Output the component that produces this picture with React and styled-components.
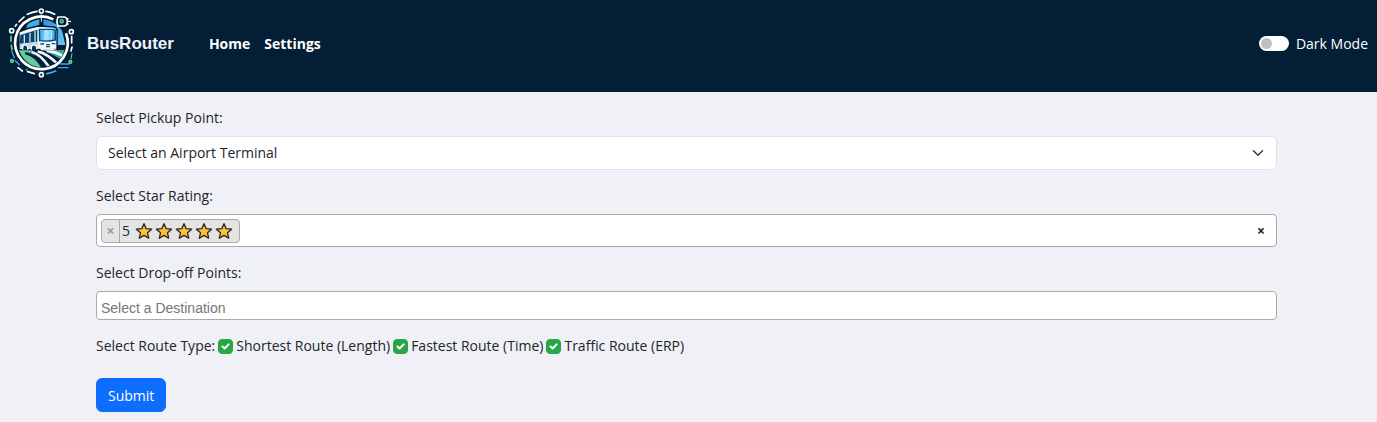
import React, { useState } from "react";
import styled, { createGlobalStyle } from "styled-components";

const GlobalStyle = createGlobalStyle`
  *, *::before, *::after { box-sizing: border-box; }
  body {
    margin: 0;
    background: #f0f1f6;
    color: #212529;
    font: 14px/22px "Open Sans", "Noto Sans", sans-serif;
  }
  button, input, select { font: inherit; color: inherit; margin: 0; }
`;

const Header = styled.header`
  display: flex;
  align-items: center;
  padding: 8px 9px 13px 8px;
  background: #031e35;
  color: #fff;
`;

const Brand = styled.a`
  display: flex;
  align-items: center;
  gap: 12px;
  color: #f0f3f5;
  text-decoration: none;
  font-family: "Liberation Sans", Arial, sans-serif;
  font-size: 17px;
  font-weight: 700;
`;

const LogoSvg = styled.svg`
  display: block;
  width: 67px;
  height: 71px;
`;

const Nav = styled.nav`
  display: flex;
  gap: 14px;
  margin-left: 35px;
`;

const NavLink = styled.a`
  color: #fff;
  font-weight: 700;
  text-decoration: none;
`;

const ThemeLabel = styled.label`
  display: flex;
  align-items: center;
  gap: 7px;
  margin-left: auto;
`;

const Switch = styled.input`
  appearance: none;
  display: flex;
  align-items: center;
  width: 30px;
  height: 15px;
  padding: 0 2px;
  border-radius: 8px;
  background: #fff;

  &::before {
    content: "";
    width: 11px;
    height: 11px;
    border-radius: 50%;
    background: #bfbfbf;
  }
  &:checked { justify-content: flex-end; }
`;

const Form = styled.form`
  display: flex;
  flex-direction: column;
  gap: 15px;
  padding: 15px 100px 10px 96px;
`;

const Field = styled.div`
  display: flex;
  flex-direction: column;
  gap: 7px;
`;

const SelectWrap = styled.div`
  display: grid;
  align-items: center;
  & > * { grid-area: 1 / 1; }
`;

const Select = styled.select`
  appearance: none;
  width: 100%;
  height: 34px;
  padding: 0 34px 0 11px;
  border: 1px solid #dee2e6;
  border-radius: 6px;
  background: #fff;
`;

const Chevron = styled.svg`
  justify-self: end;
  width: 12px;
  height: 12px;
  margin-right: 13px;
  pointer-events: none;
`;

const MultiBox = styled.div`
  display: flex;
  align-items: center;
  height: ${(p) => p.$height};
  padding: 0 4px;
  border: 1px solid #aaa;
  border-radius: 4px;
  background: #fff;
`;

const Chip = styled.span`
  display: flex;
  align-items: center;
  height: 24px;
  padding-right: 6px;
  border: 1px solid #aaa;
  border-radius: 4px;
  background: #e4e4e4;
`;

const ChipRemove = styled.button`
  width: 18px;
  height: 22px;
  padding: 0;
  border: 0;
  border-right: 1px solid #aaa;
  background: none;
  color: #999;
  font-weight: 700;
  line-height: 22px;
`;

const ChipText = styled.span`
  padding: 0 5px 0 2px;
`;

const Stars = styled.span`
  display: flex;
  gap: 2px;
`;

const StarSvg = styled.svg`
  width: 18px;
  height: 18px;
`;

const SearchInput = styled.input`
  flex: 1;
  min-width: 0;
  height: 22px;
  padding: 0;
  border: 0;
  outline: 0;
  background: transparent;
  font-family: "Liberation Sans", Arial, sans-serif;
  &::placeholder { color: #757575; opacity: 1; }
`;

const DestinationInput = styled(SearchInput)`
  margin-top: 5px;
`;

const ClearButton = styled.button`
  width: 22px;
  height: 22px;
  padding: 0;
  border: 0;
  background: none;
  font-weight: 700;
`;

const RouteTypes = styled.fieldset`
  display: flex;
  flex-wrap: wrap;
  gap: 3px;
  margin: 0;
  padding: 0;
  border: 0;
`;

const CheckLabel = styled.label`
  display: flex;
  align-items: center;
  gap: 3px;
`;

const CheckMark = styled.span`
  display: grid;
  width: 15px;
  height: 15px;
  & > * { grid-area: 1 / 1; }
`;

const Checkbox = styled.input`
  appearance: none;
  width: 15px;
  height: 15px;
  border: 1px solid #28a745;
  border-radius: 4px;
  background: #fff;
  &:checked { background: #28a745; }
`;

const Tick = styled.svg`
  width: 15px;
  height: 15px;
  pointer-events: none;
`;

const Submit = styled.button`
  align-self: flex-start;
  height: 34px;
  margin-top: 6px;
  padding: 2px 11px 0;
  border: 1px solid #0d6efd;
  border-radius: 6px;
  background: #0d6efd;
  color: #fff;
`;

function Logo() {
  return (
    <LogoSvg viewBox="24 25 201 213" fill="none" aria-hidden="true">
      <defs>
        <clipPath id="scene"><circle cx="125" cy="131" r="72" /></clipPath>
        <linearGradient id="sky" x1="0" y1="0" x2="1" y2="1">
          <stop offset="0" stopColor="#2b8fe0" />
          <stop offset="1" stopColor="#6bc8f4" />
        </linearGradient>
        <linearGradient id="glass" x1="0" y1="0" x2="1" y2="0">
          <stop offset="0" stopColor="#2b9fe8" />
          <stop offset=".5" stopColor="#a5e6ff" />
          <stop offset="1" stopColor="#2ba2ea" />
        </linearGradient>
      </defs>
      <g clipPath="url(#scene)">
        <path d="M130 56Q166 60 186 92L196 136H172V88L130 76Z" fill="url(#sky)" />
        <path d="M76 92L84 70L118 56V76Z" fill="#42a9ed" />
        <path d="M55 150H99L90 160Q114 171 126 204H105Q72 188 55 150Z" fill="#62c99a" />
        <path d="M165 151H199L183 181Q166 167 138 157Z" fill="#35a88e" />
        <path d="M94 157Q121 162 151 207M113 155Q142 162 172 192M140 153Q166 156 187 168" stroke="#eefaff" strokeWidth="8" />
        <path d="M76 160Q109 167 129 207" stroke="#031e35" strokeWidth="7" />
      </g>
      <path d="M124 46V78" stroke="#031e35" strokeWidth="7" />
      <path d="M124 44V66" stroke="#fff" strokeWidth="3" />
      <path d="M57 97Q84 84 115 79L162 82Q171 84 171 94V146Q152 154 118 149L57 150Z" fill="#f0f8fc" stroke="#031e35" strokeWidth="4" />
      <path d="M61 106L112 90V126L59 132Z" fill="#0d4168" />
      <path d="M73 105V130M90 99V128M105 93V126" stroke="#c3e6f8" strokeWidth="4" />
      <path d="M118 89H161Q167 90 166 97V121Q146 126 119 123Z" fill="url(#glass)" stroke="#064876" strokeWidth="4" />
      <path d="M137 92L134 121M154 92V120" stroke="#c2f0ff" strokeWidth="3" />
      <path d="M60 133L114 127V146H60Z" fill="#bdd8e7" />
      <path d="M68 150V141Q75 130 83 141V150M94 150V141Q102 130 110 141V149" fill="#0d3453" stroke="#fff" strokeWidth="4" />
      <path d="M121 133H132M155 132H166M138 135H150M138 141H150" stroke="#16496c" strokeWidth="4" />
      <path d="M122 149Q148 154 169 147" stroke="#fff" strokeWidth="4" />
      <path d="M160 59A79 79 0 1 0 198 101" stroke="#fff" strokeWidth="8" />
      <g stroke="#fff" strokeWidth="5" strokeLinecap="round">
        <path d="M111 35Q94 38 82 44M138 35Q152 37 164 44M72 52L57 66M50 74L46 79M215 110V130M216 142L213 154" />
        <path d="M54 204L67 214M103 222L83 216" />
        <path d="M140 222Q154 220 167 214" stroke="#38aaf0" />
        <path d="M33 110V125M34 137L36 150" stroke="#65d0a3" />
        <path d="M35 155L43 174M46 183L58 195M182 193H207M176 204H204" stroke="#38aaf0" strokeWidth="4" />
        <path d="M216 162L213 178" stroke="#65d0a3" strokeWidth="3" />
      </g>
      <g fill="#031e35" stroke="#fff" strokeWidth="5">
        <circle cx="124" cy="34" r="6" />
        <circle cx="35" cy="93" r="6" />
        <circle cx="214" cy="96" r="6" />
        <circle cx="124" cy="225" r="6" />
        <circle cx="36" cy="184" r="4" stroke="#65d0a3" />
        <circle cx="211" cy="187" r="4" stroke="#65d0a3" />
      </g>
      <circle cx="80" cy="210" r="3" fill="#38aaf0" />
      <path d="M174 52H194Q202 54 202 65Q202 77 194 79H174Q168 65 174 52Z" fill="#031e35" stroke="#fff" strokeWidth="5" />
      <path d="M200 57H206M200 73H206M202 65H213" stroke="#fff" strokeWidth="4" />
      <circle cx="185" cy="65" r="5" fill="#0a6382" stroke="#65d0a3" strokeWidth="4" />
    </LogoSvg>
  );
}

function Star() {
  return (
    <StarSvg viewBox="0 0 18 18" aria-hidden="true">
      <path d="M9 1.7L11.2 6.7L16.6 7.2L12.5 10.8L13.7 16.2L9 13.4L4.3 16.2L5.5 10.8L1.4 7.2L6.8 6.7Z" fill="#ffc232" stroke="#242424" strokeWidth="1.3" strokeLinejoin="round" />
    </StarSvg>
  );
}

function RouteOption({ children }) {
  const [checked, setChecked] = useState(true);
  return (
    <CheckLabel>
      <CheckMark>
        <Checkbox type="checkbox" checked={checked} onChange={(e) => setChecked(e.target.checked)} />
        <Tick viewBox="0 0 15 15" aria-hidden="true">
          <path d="M4.5 7.5L6.6 9.5L10.7 5.4" fill="none" stroke="#fff" strokeWidth="2" strokeLinecap="round" strokeLinejoin="round" />
        </Tick>
      </CheckMark>
      {children}
    </CheckLabel>
  );
}

export default function App() {
  const [hasRating, setHasRating] = useState(true);
  const clearRating = () => setHasRating(false);
  return (
    <>
      <GlobalStyle />
      <Header>
        <Brand href="#home"><Logo />BusRouter</Brand>
        <Nav>
          <NavLink href="#home">Home</NavLink>
          <NavLink href="#settings">Settings</NavLink>
        </Nav>
        <ThemeLabel><Switch type="checkbox" role="switch" />Dark Mode</ThemeLabel>
      </Header>
      <main>
        <Form onSubmit={(e) => e.preventDefault()}>
          <Field>
            <label htmlFor="pickup">Select Pickup Point:</label>
            <SelectWrap>
              <Select id="pickup"><option>Select an Airport Terminal</option></Select>
              <Chevron viewBox="0 0 16 16" aria-hidden="true">
                <path d="M2 5l6 6 6-6" fill="none" stroke="#343a40" strokeWidth="2" strokeLinecap="round" strokeLinejoin="round" />
              </Chevron>
            </SelectWrap>
          </Field>
          <Field>
            <label htmlFor="rating">Select Star Rating:</label>
            <MultiBox $height="33px">
              {hasRating && (
                <Chip>
                  <ChipRemove type="button" aria-label="Remove 5 stars" onClick={clearRating}>×</ChipRemove>
                  <ChipText>5</ChipText>
                  <Stars><Star /><Star /><Star /><Star /><Star /></Stars>
                </Chip>
              )}
              <SearchInput id="rating" />
              <ClearButton type="button" aria-label="Clear ratings" onClick={clearRating}>×</ClearButton>
            </MultiBox>
          </Field>
          <Field>
            <label htmlFor="destination">Select Drop-off Points:</label>
            <MultiBox $height="29px">
              <DestinationInput id="destination" placeholder="Select a Destination" />
            </MultiBox>
          </Field>
          <RouteTypes aria-labelledby="route-type">
            <span id="route-type">Select Route Type:</span>
            <RouteOption>Shortest Route (Length)</RouteOption>
            <RouteOption>Fastest Route (Time)</RouteOption>
            <RouteOption>Traffic Route (ERP)</RouteOption>
          </RouteTypes>
          <Submit type="submit">Submit</Submit>
        </Form>
      </main>
    </>
  );
}
